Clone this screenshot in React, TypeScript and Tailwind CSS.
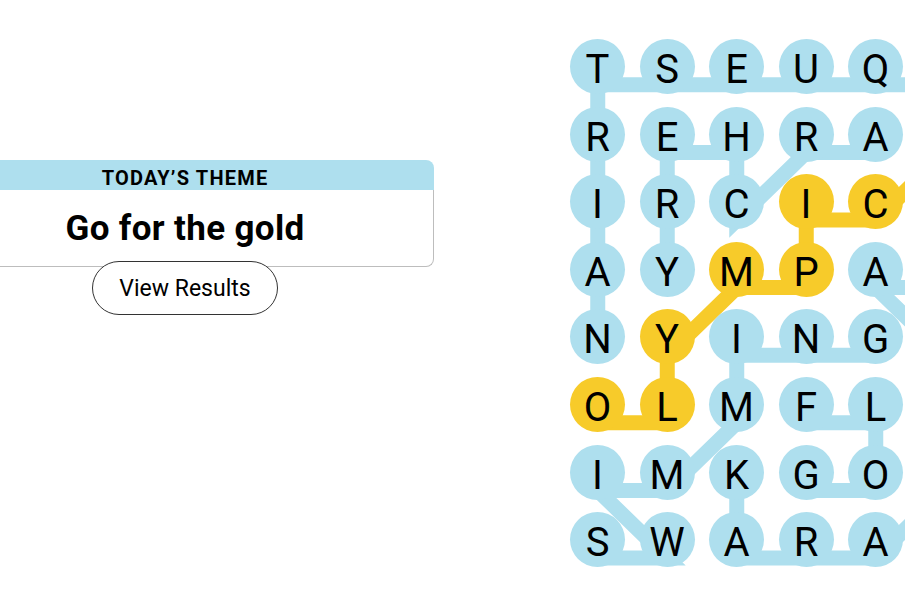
import React from "react";

const COLW = 69.5;
const ROWH = 67.6;
const OFF = 18;

const LETTERS = [
  "TSEUQ",
  "REHRA",
  "IRCIC",
  "AYMPA",
  "NYING",
  "OLMFL",
  "IMKGO",
  "SWARA",
];

type P = [number, number];

const WORDS: { path: P[]; gold?: boolean }[] = [
  { path: [[0, 5], [0, 4], [0, 3], [0, 2], [0, 1], [0, 0], [1, 0], [2, 0], [3, 0], [4, 0]] },
  { path: [[1, 4], [1, 3], [2, 2], [1, 2], [1, 1], [2, 1], [3, 1]] },
  { path: [[7, 0], [7, 1], [6, 0], [6, 1], [5, 2], [4, 2], [4, 3], [4, 4]] },
  { path: [[6, 3], [6, 4], [5, 4], [5, 3]] },
  { path: [[6, 2], [7, 2], [7, 3], [7, 4], [6, 5], [7, 5]] },
  { path: [[2, 5], [3, 5], [3, 4], [4, 5], [5, 5]] },
  { path: [[5, 0], [5, 1], [4, 1], [3, 2], [3, 3], [2, 3], [2, 4], [1, 5]], gold: true },
];

const goldCells = new Set(
  WORDS.filter((w) => w.gold)
    .flatMap((w) => w.path)
    .map(([r, c]) => `${r}-${c}`)
);

const BLUE = "#aedfee";
const GOLD = "#f7cb2a";

function Board() {
  return (
    <div className="relative shrink-0 ml-[128.75px] mt-[32.7px] w-[417px] h-[540.8px]">
      <svg
        className="absolute left-0 top-0 overflow-visible"
        width={417}
        height={541}
        viewBox="0 0 417 541"
      >
        {WORDS.map((w, i) => (
          <polyline
            key={i}
            points={w.path
              .map(([r, c]) => `${COLW / 2 + COLW * c},${ROWH / 2 + ROWH * r + OFF}`)
              .join(" ")}
            fill="none"
            stroke={w.gold ? GOLD : BLUE}
            strokeWidth={15}
            strokeLinejoin="miter"
            strokeLinecap="butt"
          />
        ))}
      </svg>
      <div className="relative grid grid-cols-[repeat(6,69.5px)] grid-rows-[repeat(8,67.6px)]">
        {LETTERS.map((row, r) =>
          [0, 1, 2, 3, 4, 5].map((c) => {
            const ch = row[c] ?? "";
            const gold = goldCells.has(`${r}-${c}`);
            return (
              <div key={`${r}-${c}`} className="flex items-center justify-center">
                <div
                  className={`w-[55px] h-[55px] rounded-full flex items-center justify-center pt-[7px] text-[40px] leading-none text-black ${
                    gold ? "bg-[#f7cb2a]" : "bg-[#aedfee]"
                  }`}
                  style={{ fontFamily: "Roboto, 'Liberation Sans', sans-serif" }}
                >
                  {ch}
                </div>
              </div>
            );
          })
        )}
      </div>
    </div>
  );
}

export default function App() {
  return (
    <div
      className="w-[905px] h-[601px] overflow-hidden bg-white flex items-start"
      style={{ fontFamily: "Roboto, 'Liberation Sans', sans-serif" }}
    >
      <div className="w-[498px] ml-[-64px] shrink-0 mt-[160px] flex flex-col items-center">
        <div className="w-full">
          <div className="h-[30px] bg-[#aedfee] rounded-t-[8px] flex items-center justify-center pt-[5px]">
            <span className="text-[20px] font-bold tracking-[0.06em] text-black leading-none">
              TODAY’S THEME
            </span>
          </div>
          <div className="h-[77px] bg-white border-x border-b border-[#bdbdbd] rounded-b-[8px] flex items-center justify-center">
            <span className="text-[35px] font-bold tracking-[0.01em] text-black leading-none">
              Go for the gold
            </span>
          </div>
        </div>
        <button className="relative -mt-[6px] w-[186px] h-[54px] rounded-full border border-[#333333] bg-white flex items-center justify-center pt-[3px] text-[23px] text-black">
          View Results
        </button>
      </div>
      <Board />
    </div>
  );
}
